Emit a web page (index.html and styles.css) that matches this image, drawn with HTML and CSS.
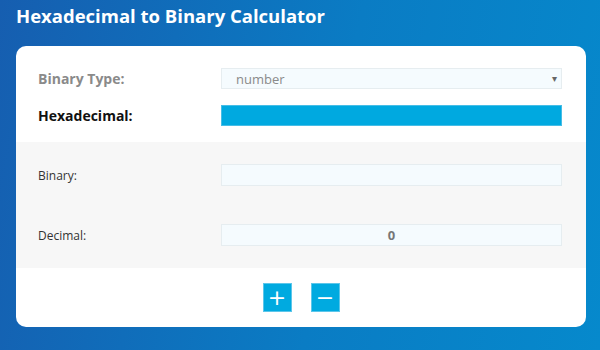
FILE: index.html
```html
<!DOCTYPE html>
<html lang="en">
<head>
  <meta charset="UTF-8" />
  <meta name="viewport" content="width=device-width, initial-scale=1.0" />
  <title>Hexadecimal to Binary Calculator</title>
  <link rel="stylesheet" href="styles.css">
</head>
<body>
  <h1 class="page-title">Hexadecimal to Binary Calculator</h1>

  <div class="calc-card">
    <div class="calc-inputs">
      <div class="calc-row">
        <label class="label-muted" for="binType">Binary Type:</label>
        <div class="select-wrap">
          <select id="binType" class="field">
            <option>number</option>
          </select>
        </div>
      </div>
      <div class="calc-row">
        <label class="label-strong" for="hexInput">Hexadecimal:</label>
        <input type="text" id="hexInput" class="field field-active" />
      </div>
    </div>

    <div class="calc-results">
      <div class="calc-row">
        <label class="label-plain" for="binOut">Binary:</label>
        <input type="text" id="binOut" class="field field-result" readonly />
      </div>
      <div class="calc-row">
        <label class="label-plain" for="decOut">Decimal:</label>
        <input type="text" id="decOut" class="field field-result" value="0" readonly />
      </div>
    </div>

    <div class="calc-actions">
      <button class="action-btn">+</button>
      <button class="action-btn">&minus;</button>
    </div>
  </div>
</body>
</html>
```

FILE: styles.css
```css
* {
  margin: 0;
  padding: 0;
  box-sizing: border-box;
}

body {
  height: 350px;
  background: linear-gradient(100deg, #165eb0 0%, #0a7cc4 55%, #0689cc 100%);
  font-family: 'Open Sans', 'Noto Sans', sans-serif;
  overflow: hidden;
}

.page-title {
  color: #ffffff;
  font-size: 18.5px;
  font-weight: 700;
  line-height: 22px;
  padding: 5px 16px 19px;
}

.calc-card {
  margin: 0 14px 0 16px;
  background: #ffffff;
  border-radius: 10px;
  overflow: hidden;
}

.calc-inputs {
  display: flex;
  flex-direction: column;
  gap: 16px;
  padding: 22px 0 16px;
}

.calc-inputs .calc-row {
  height: 21px;
}

.calc-results {
  display: flex;
  flex-direction: column;
  gap: 38px;
  padding: 22px 0;
  background: #f7f7f7;
}

.calc-results .calc-row {
  height: 22px;
}

.calc-row {
  display: grid;
  grid-template-columns: 183px 1fr;
  align-items: center;
  padding: 0 24px 0 22px;
}

.label-muted {
  color: #8a8a8a;
  font-size: 14px;
  font-weight: 700;
}

.label-strong {
  color: #111111;
  font-size: 14px;
  font-weight: 700;
}

.label-plain {
  color: #333333;
  font-size: 12px;
}

.field {
  display: block;
  width: 100%;
  height: 22px;
  border: 1px solid #e6edf0;
  background: #f5fbfe;
  font-family: inherit;
  font-size: 13px;
  outline: none;
}

.calc-inputs .field {
  height: 21px;
}

.select-wrap {
  position: relative;
}

.select-wrap select {
  appearance: none;
  -webkit-appearance: none;
  color: #8a8a8a;
  padding: 0 14px;
}

.select-wrap::after {
  content: '\25BE';
  position: absolute;
  right: 5px;
  top: 3px;
  font-size: 10px;
  color: #666666;
}

.field-active {
  background: #00a9e0;
  border-color: #46bde6;
}

.field-result {
  text-align: center;
  color: #777777;
  font-weight: 700;
}

.calc-actions {
  display: flex;
  justify-content: center;
  gap: 19px;
  padding: 15px 0;
}

.action-btn {
  width: 29px;
  height: 29px;
  background: #00aae0;
  border: 1px solid #5cc6ea;
  color: #ffffff;
  font-family: 'DejaVu Sans', sans-serif;
  font-size: 22px;
  line-height: 25px;
  cursor: pointer;
}
```
